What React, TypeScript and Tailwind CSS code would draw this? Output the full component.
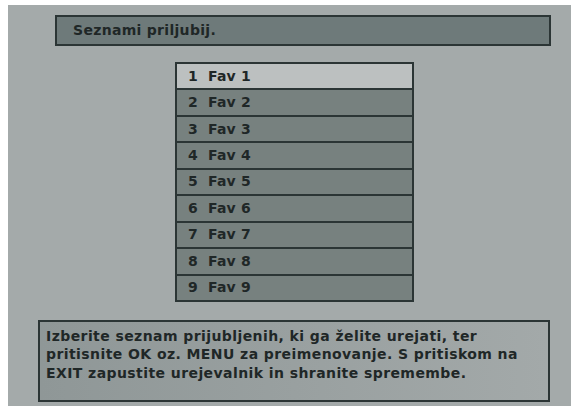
import React from "react";

const items = ["Fav 1", "Fav 2", "Fav 3", "Fav 4", "Fav 5", "Fav 6", "Fav 7", "Fav 8", "Fav 9"];

export default function App() {
  return (
    <div
      className="w-[571px] h-[406px] bg-white pt-[5px] pl-[8px] flex overflow-hidden"
      style={{ fontFamily: '"DejaVu Sans", Verdana, sans-serif' }}
    >
      <div className="flex-1 bg-[#a4aaaa] flex flex-col pt-[10px] text-[#1f2727] font-bold">
        <div className="ml-[47px] w-[496px] h-[31px] border-2 border-[#2b3535] bg-[#6e7a7a] flex items-center pl-[16px] text-[14px] tracking-[0.3px]">
          Seznami priljubij.
        </div>
        <div className="ml-[167px] mt-[16px] w-[239px] h-[240px] border-2 border-[#2b3535] flex flex-col divide-y-2 divide-[#2b3535] text-[14px] tracking-[0.2px]">
          {items.map((name, i) => (
            <div
              key={name}
              className={
                "flex-1 flex items-center pl-[11px] " +
                (i === 0 ? "bg-[#bcc0c0]" : "bg-[#77817f]")
              }
            >
              <span className="w-[20px]">{i + 1}</span>
              <span>{name}</span>
            </div>
          ))}
        </div>
        <div className="ml-[30px] mt-[18px] w-[512px] h-[82px] border-2 border-[#2b3535] bg-gradient-to-r from-[#8f9797] to-[#a3a9a9] pl-[6px] pt-[5px] text-[14px] leading-[18.3px] tracking-[0.42px]">
          <div>Izberite seznam prijubljenih, ki ga želite urejati, ter</div>
          <div>pritisnite OK oz. MENU za preimenovanje. S pritiskom na</div>
          <div>EXIT zapustite urejevalnik in shranite spremembe.</div>
        </div>
      </div>
    </div>
  );
}
